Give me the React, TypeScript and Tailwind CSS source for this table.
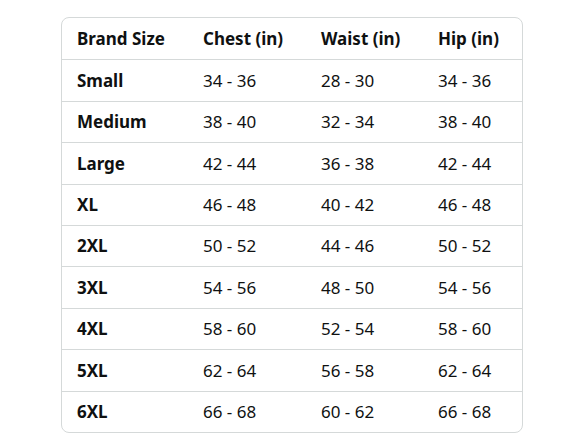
const rows: [string, string, string, string][] = [
  ['Small', '34 - 36', '28 - 30', '34 - 36'],
  ['Medium', '38 - 40', '32 - 34', '38 - 40'],
  ['Large', '42 - 44', '36 - 38', '42 - 44'],
  ['XL', '46 - 48', '40 - 42', '46 - 48'],
  ['2XL', '50 - 52', '44 - 46', '50 - 52'],
  ['3XL', '54 - 56', '48 - 50', '54 - 56'],
  ['4XL', '58 - 60', '52 - 54', '58 - 60'],
  ['5XL', '62 - 64', '56 - 58', '62 - 64'],
  ['6XL', '66 - 68', '60 - 62', '66 - 68'],
];

const headers = ['Brand Size', 'Chest (in)', 'Waist (in)', 'Hip (in)'];

export default function App() {
  return (
    <div className="h-[441px] w-[588px] bg-white pl-[61px] pt-[17px] font-['Noto_Sans',sans-serif] text-[17px] text-[#0f1111]">
      <div className="w-[462px] overflow-hidden rounded-[8px] border border-[#d5d9d9]">
        <div className="grid h-[41.4px] grid-cols-[126px_118px_117px_1fr] items-center pl-[15px] font-bold">
          {headers.map((h) => (
            <span key={h}>{h}</span>
          ))}
        </div>
        {rows.map((r) => (
          <div
            key={r[0]}
            className="grid h-[41.4px] grid-cols-[126px_118px_117px_1fr] items-center border-t border-[#d5d9d9] pl-[15px]"
          >
            <span className="font-bold">{r[0]}</span>
            <span>{r[1]}</span>
            <span>{r[2]}</span>
            <span>{r[3]}</span>
          </div>
        ))}
      </div>
    </div>
  );
}
